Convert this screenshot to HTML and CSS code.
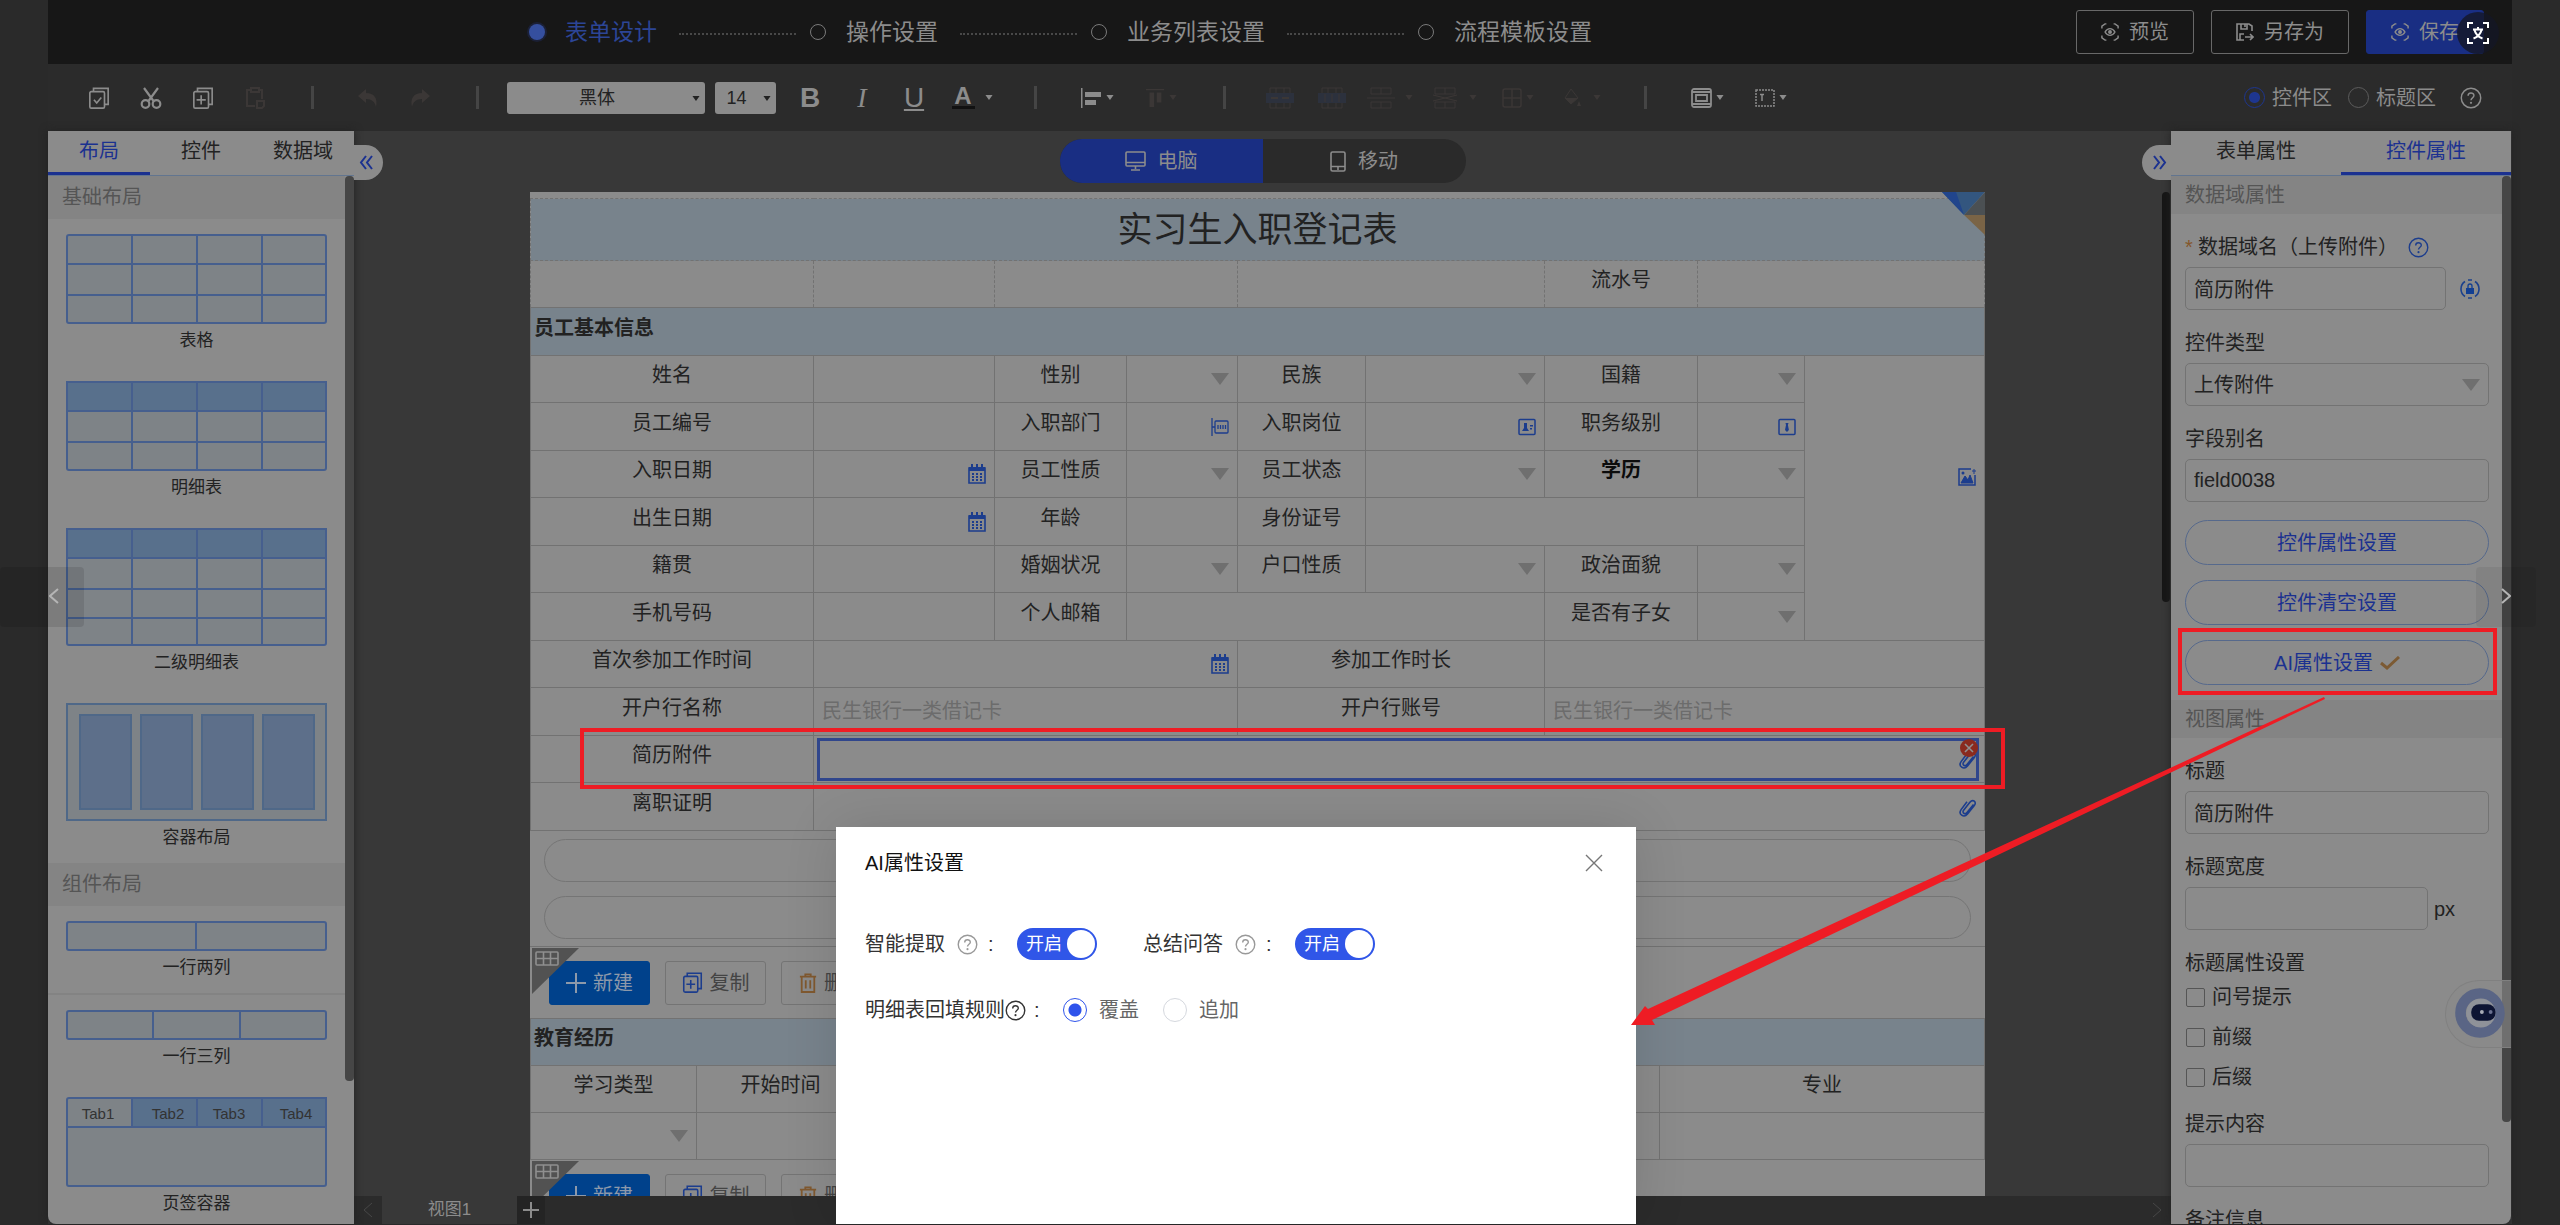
FILE: index.html
```html
<!DOCTYPE html>
<html lang="zh">
<head>
  <meta charset="UTF-8">
  <meta name="viewport" content="width=device-width, initial-scale=1.0">
  <title>表单设计</title>
  <link rel="stylesheet" href="styles.css">
</head>
<body>
  <svg class="sprite" aria-hidden="true">
    <symbol id="i-caret" viewBox="0 0 10 7"><path d="M0 0h10L5 7z" fill="currentColor"/></symbol>
    <symbol id="i-help" viewBox="0 0 24 24"><g fill="none" stroke="currentColor" stroke-width="1.6"><circle cx="12" cy="12" r="10.6"/><path d="M8.8 9.6c0-4 6.4-4 6.4-.2 0 2.4-3.2 2.4-3.2 5"/></g><circle cx="12" cy="17.3" r="1.2" fill="currentColor"/></symbol>
    <symbol id="i-cal" viewBox="0 0 18 20"><path d="M1 4h16v15H1z" fill="none" stroke="currentColor" stroke-width="1.6"/><path d="M1 3h16v4H1zM3 0h2v4H3zM8 0h2v4H8zM13 0h2v4h-2zM4 9h2v2H4zM8 9h2v2H8zM12 9h2v2h-2zM4 12h2v2H4zM8 12h2v2H8zM12 12h2v2h-2zM4 15h2v2H4zM8 15h2v2H8zM12 15h2v2h-2z" fill="currentColor"/></symbol>
    <symbol id="i-tri" viewBox="0 0 18 12"><path d="M0 0h18L9 12z" fill="currentColor"/></symbol>
    <symbol id="i-clip" viewBox="0 0 18 20"><path d="M15.5 7.5 9 15.5c-2.2 2.6-5.3.2-3.4-2.2l6.3-8c3-3.7 7.2-.4 4.4 3.2L9.5 17c-3.7 4.4-9.6.3-6.400-4.400L9 4.800" fill="none" stroke="currentColor" stroke-width="1.6"/></symbol>
    <symbol id="i-copy" viewBox="0 0 24 24"><g fill="none" stroke="currentColor" stroke-width="1.8"><rect x="2" y="5" width="16" height="18" rx="1.5"/><path d="M6 5V1.5h16V19h-4M10 9v10M5 14h10"/></g></symbol>
    <symbol id="i-eye" viewBox="0 0 20 20"><g fill="none" stroke="currentColor" stroke-width="1.6"><path d="M1 6V3.500L4.500 1H6M14 1h1.500L19 3.500V6M19 14v2.500L15.500 19H14M6 19H4.500L1 16.500V14"/><path d="M4.500 10c3-5 8-5 11 0-3 5-8 5-11 0z"/></g><circle cx="10" cy="10" r="2.2" fill="currentColor"/></symbol>
    <symbol id="i-trash" viewBox="0 0 20 22"><path d="M1 4h18M7 4V1.500h6V4M3 4v17h14V4M7.500 8v9M12.500 8v9" fill="none" stroke="currentColor" stroke-width="2"/></symbol>
    <symbol id="i-corner" viewBox="0 0 47 46"><path d="M0 0h47L0 46z" fill="#525252"/><g fill="none" stroke="#8f8f8f" stroke-width="1.6"><rect x="4" y="4" width="22" height="13" rx="1"/><path d="M4 10.500h22M11.500 4v13M18.500 4v13"/></g></symbol>
  </svg>

  <div class="app">
    <header class="topbar">
      <nav class="steps">
        <a href="#" class="step current"><i class="dot"></i>表单设计</a>
        <span class="dash"></span>
        <a href="#" class="step"><i class="dot"></i>操作设置</a>
        <span class="dash"></span>
        <a href="#" class="step"><i class="dot"></i>业务列表设置</a>
        <span class="dash"></span>
        <a href="#" class="step"><i class="dot"></i>流程模板设置</a>
      </nav>
      <div class="actions">
        <button class="btn"><svg width="18" height="18"><use href="#i-eye"/></svg>预览</button>
        <button class="btn"><svg width="18" height="18" viewBox="0 0 18 18" fill="none" stroke="currentColor" stroke-width="1.6"><path d="M8 17H1V1h12l3 2v5M5 1v5h6V1M9 1v3M8 11H4v6M9 14h8M14 11l3 3-3 3"/></svg>另存为</button>
        <button class="btn primary"><svg width="18" height="18"><use href="#i-eye"/></svg>保存</button>
      </div>
      <button class="translate" aria-label="翻译">
        <svg width="22" height="22" viewBox="0 0 22 22" fill="none" stroke="#fff" stroke-width="2"><path d="M1 6V1h5M16 1h5v5M21 16v5h-5M6 21H1v-5M6 7.500h10M11 5v2.500M14.500 8c-1 4-4 7-8 8.500M7.500 8c1 4 4 7 8 8.500"/></svg>
      </button>
    </header>

    <div class="toolbar">
      <button class="tool" aria-label="全选"><svg width="22" height="22" viewBox="0 0 24 24" fill="none" stroke="currentColor" stroke-width="1.8"><rect x="2" y="5" width="16" height="18" rx="1.5"/><path d="M6 5V1.500h16V19h-4M6.500 14l3 3.500 5-6"/></svg></button>
      <button class="tool" aria-label="剪切"><svg width="22" height="22" viewBox="0 0 22 22" fill="none" stroke="currentColor" stroke-width="2.2"><circle cx="5.5" cy="17" r="3.8"/><circle cx="16.5" cy="17" r="3.8"/><path d="M4 1l9.500 13M18 1L8.500 14"/></svg></button>
      <button class="tool" aria-label="复制"><svg width="22" height="22"><use href="#i-copy"/></svg></button>
      <button class="tool off" aria-label="粘贴" disabled><svg width="20" height="22" viewBox="0 0 20 22" fill="none" stroke="currentColor" stroke-width="2"><path d="M6 3H2v16h8M14 3h3v9M6 1h8v4H6zM12 14h7v5l-2 2h-5z"/></svg></button>
      <span class="sep"></span>
      <button class="tool off" aria-label="撤销" disabled><svg width="20" height="18" viewBox="0 0 20 18"><path d="M8 0v4c8 0 12 5 10 14-1-5-4-8-10-8v4L0 7z" fill="currentColor"/></svg></button>
      <button class="tool off" aria-label="重做" disabled><svg width="20" height="18" viewBox="0 0 20 18"><path d="M12 0v4C4 4 0 9 2 18c1-5 4-8 10-8v4l8-7z" fill="currentColor"/></svg></button>
      <span class="sep"></span>
      <div class="pick pick-font"><select aria-label="字体"><option>黑体</option></select><svg width="8" height="5"><use href="#i-caret"/></svg></div>
      <div class="pick pick-size"><select aria-label="字号"><option>14</option></select><svg width="8" height="5"><use href="#i-caret"/></svg></div>
      <button class="tool glyph bold">B</button>
      <button class="tool glyph italic">I</button>
      <button class="tool glyph under">U</button>
      <button class="tool drop wide glyph"><span class="color-a">A</span><svg width="8" height="5"><use href="#i-caret"/></svg></button>
      <span class="sep"></span>
      <button class="tool drop" aria-label="水平对齐"><svg width="22" height="22" viewBox="0 0 22 22"><path d="M1 1h1.500v20H1zM5 5h16v5H5zM5 13h11v5H5z" fill="currentColor"/></svg><svg width="8" height="5"><use href="#i-caret"/></svg></button>
      <button class="tool drop off" aria-label="垂直对齐" disabled><svg width="20" height="22" viewBox="0 0 22 22"><path d="M1 1h20v1.500H1zM5 5h5v16H5zM13 5h5v11h-5z" fill="currentColor"/></svg><svg width="8" height="5"><use href="#i-caret"/></svg></button>
      <span class="sep"></span>
      <button class="tool off" aria-label="合并" disabled><svg width="30" height="22" viewBox="0 0 30 22"><path d="M5 6V1h20v5M5 16v5h20v-5M11 1v5M19 1v5M11 16v5M19 16v5" fill="none" stroke="currentColor"/><path d="M1 6h28v10H1z" fill="#2c313d"/><path d="M6 11h7M17 11h7" stroke="currentColor" stroke-width="2"/></svg></button>
      <button class="tool off" aria-label="拆分" disabled><svg width="30" height="22" viewBox="0 0 30 22"><path d="M5 6V1h20v5M5 16v5h20v-5M11 1v5M19 1v5M11 16v5M19 16v5" fill="none" stroke="currentColor"/><path d="M1 6h28v10H1z" fill="#2c313d"/><path d="M8 7v8M15 7v8M22 7v8" stroke="currentColor"/></svg></button>
      <button class="tool drop wide off" aria-label="插入行" disabled><svg width="28" height="22" viewBox="0 0 28 22" fill="none" stroke="currentColor"><path d="M4 7V1h20v6zM4 15v6h20v-6zM14 1v6M14 15v6M0 11h28"/></svg><svg width="8" height="5"><use href="#i-caret"/></svg></button>
      <button class="tool drop wide off" aria-label="删除行" disabled><svg width="28" height="22" viewBox="0 0 28 22" fill="none" stroke="currentColor"><path d="M4 7V1h20v6zM4 15v6h20v-6zM14 1v6M14 15v6M2 8l24 6M26 8L2 14"/></svg><svg width="8" height="5"><use href="#i-caret"/></svg></button>
      <button class="tool drop off" aria-label="边框" disabled><svg width="20" height="20" viewBox="0 0 20 20" fill="none" stroke="currentColor" stroke-width="1.5"><rect x="1" y="1" width="18" height="18" rx="2"/><path d="M10 1v18M1 10h18"/></svg><svg width="8" height="5"><use href="#i-caret"/></svg></button>
      <button class="tool drop wide off" aria-label="填充" disabled><svg width="20" height="20" viewBox="0 0 20 20"><path d="M8 1l7 9-7 6-6-6z" fill="none" stroke="currentColor"/><path d="M2 10h13l-7 6zM16 13l2 5h-4z" fill="currentColor"/></svg><svg width="8" height="5"><use href="#i-caret"/></svg></button>
      <span class="sep"></span>
      <button class="tool drop" aria-label="布局"><svg width="21" height="20" viewBox="0 0 21 20" fill="none" stroke="currentColor" stroke-width="1.8"><rect x="1" y="1" width="19" height="18" rx="2"/><path d="M1 4h19M1 16h19M5 7h11v6H5z"/></svg><svg width="8" height="5"><use href="#i-caret"/></svg></button>
      <button class="tool drop" aria-label="文本框"><svg width="20" height="18" viewBox="0 0 20 18" fill="none" stroke="currentColor" stroke-width="1.5"><rect x="1" y="1" width="18" height="16" stroke-dasharray="2 1"/><path d="M5 5.500h4M7 5v7"/></svg><svg width="8" height="5"><use href="#i-caret"/></svg></button>
      <div class="area-pick">
        <label class="radio"><input type="radio" name="area" checked>控件区</label>
        <label class="radio"><input type="radio" name="area">标题区</label>
        <svg width="22" height="22"><use href="#i-help"/></svg>
      </div>
    </div>

    <main class="main">
      <aside class="panel palette">
        <div class="tabs">
          <a href="#" class="tab active">布局</a>
          <a href="#" class="tab">控件</a>
          <a href="#" class="tab">数据域</a>
        </div>
        <div class="panel-body">
          <h2 class="group">基础布局</h2>
          <div class="item">
            <svg class="thumb" viewBox="0 0 261 90"><rect x="1" y="1" width="259" height="88" rx="2"/><path d="M66 1v88M131 1v88M196 1v88M1 30h259M1 61h259"/></svg>
            <p>表格</p>
          </div>
          <div class="item">
            <svg class="thumb" viewBox="0 0 261 90"><rect x="1" y="1" width="259" height="88" rx="2"/><path class="fill" d="M1 1h259v29H1z"/><path d="M66 1v88M131 1v88M196 1v88M1 30h259M1 61h259"/></svg>
            <p>明细表</p>
          </div>
          <div class="item">
            <svg class="thumb" viewBox="0 0 261 118"><rect x="1" y="1" width="259" height="116" rx="2"/><path class="fill" d="M1 1h259v29H1z"/><path d="M66 1v116M131 1v116M196 1v116M1 30h259M1 61h259M1 90h259"/></svg>
            <p>二级明细表</p>
          </div>
          <div class="item">
            <svg class="thumb soft" viewBox="0 0 261 118"><rect x="1" y="1" width="259" height="116"/><path class="fill" d="M14 12h51v94H14zM75 12h51v94H75zM136 12h51v94h-51zM197 12h51v94h-51z"/></svg>
            <p>容器布局</p>
          </div>
          <h2 class="group">组件布局</h2>
          <div class="item ruled">
            <svg class="thumb" viewBox="0 0 261 30"><rect x="1" y="1" width="259" height="28" rx="2"/><path d="M130 1v28"/></svg>
            <p>一行两列</p>
          </div>
          <div class="item">
            <svg class="thumb" viewBox="0 0 261 30"><rect x="1" y="1" width="259" height="28" rx="2"/><path d="M87 1v28M174 1v28"/></svg>
            <p>一行三列</p>
          </div>
          <div class="item">
            <svg class="thumb" viewBox="0 0 261 90"><rect x="1" y="1" width="259" height="88" rx="2"/><path class="fill" d="M66 1h194v29H66z"/><path d="M66 1v29M131 1v29M196 1v29M1 30h259"/><text x="32" y="22">Tab1</text><text x="102" y="22">Tab2</text><text x="163" y="22">Tab3</text><text x="230" y="22">Tab4</text></svg>
            <p>页签容器</p>
          </div>
          <span class="scroll"></span>
        </div>
      </aside>

      <section class="stage">
        <button class="fold fold-left" aria-label="收起"><svg width="15" height="15" viewBox="0 0 15 15"><path d="M7 1L2 7.500 7 14M13 1L8 7.500l5 6.500"/></svg></button>
        <button class="fold fold-right" aria-label="收起"><svg width="15" height="15" viewBox="0 0 15 15"><path d="M2 1l5 6.500L2 14M8 1l5 6.500L8 14"/></svg></button>
        <div class="device">
          <button class="on"><svg width="21" height="20" viewBox="0 0 21 20" fill="none" stroke="currentColor" stroke-width="1.6"><rect x="1" y="1" width="19" height="14" rx="1"/><path d="M1 11.500h19M10.500 15v3M6 19h9"/></svg>电脑</button>
          <button><svg width="16" height="21" viewBox="0 0 16 21" fill="none" stroke="currentColor" stroke-width="1.6"><rect x="1" y="1" width="14" height="19" rx="1.5"/><path d="M1 15.500h14M8 16v3"/></svg>移动</button>
        </div>

        <div class="canvas-wrap">
          <div class="canvas">
            <svg class="ribbon" width="43" height="43" viewBox="0 0 43 43"><path d="M0 0h43L22 23z" fill="#33567f"/><path d="M0 0h14l8 23z" fill="#21458c"/><path d="M43 0v23H22z" fill="#4b5053"/><path d="M22 23h21v20z" fill="#7a6446"/></svg>
            <table class="form">
              <colgroup><col><col><col><col><col><col><col><col><col></colgroup>
              <tr class="title"><th colspan="9">实习生入职登记表</th></tr>
              <tr class="dashed"><td></td><td></td><td colspan="2"></td><td colspan="2"></td><td>流水号</td><td colspan="2"></td></tr>
              <tr class="band"><th colspan="9">员工基本信息</th></tr>
              <tr>
                <td>姓名</td><td></td><td>性别</td><td class="ctl"><svg class="tri"><use href="#i-tri"/></svg></td><td>民族</td><td class="ctl"><svg class="tri"><use href="#i-tri"/></svg></td><td>国籍</td><td class="ctl"><svg class="tri"><use href="#i-tri"/></svg></td>
                <td class="ctl photo" rowspan="6"><svg class="ic" viewBox="0 0 18 18"><path d="M13 1H1v16h16V7" fill="none" stroke="currentColor" stroke-width="1.5"/><path d="M3 15l4-7 3 4 2-5 3 8zM14 3h4M16 1v5" stroke="currentColor" fill="currentColor"/><circle cx="5" cy="5" r="1.5" fill="currentColor"/></svg></td>
              </tr>
              <tr>
                <td>员工编号</td><td></td><td>入职部门</td><td class="ctl"><svg class="ic" viewBox="0 0 18 18" fill="none" stroke="currentColor" stroke-width="1.3"><path d="M1 0v18M1 9h3"/><rect x="4" y="3" width="13" height="12" rx="1"/><path d="M7 7v4M9.500 7v4M12 7v4M14.500 7v4"/></svg></td><td>入职岗位</td><td class="ctl"><svg class="ic" viewBox="0 0 18 18"><rect x="1" y="1.5" width="16" height="15" rx="1" fill="none" stroke="currentColor" stroke-width="1.5"/><path d="M4 13h7l-2-3V5H6v5zM12 7h3v1.500h-3zM12 10h2v1.500h-2z" fill="currentColor"/></svg></td><td>职务级别</td><td class="ctl"><svg class="ic" viewBox="0 0 18 18"><rect x="1" y="1.5" width="16" height="15" rx="1" fill="none" stroke="currentColor" stroke-width="1.5"/><path d="M7.500 5h3l-.6 2 1 5L9 14l-2-2 1-5z" fill="currentColor"/></svg></td>
              </tr>
              <tr>
                <td>入职日期</td><td class="ctl"><svg class="ic"><use href="#i-cal"/></svg></td><td>员工性质</td><td class="ctl"><svg class="tri"><use href="#i-tri"/></svg></td><td>员工状态</td><td class="ctl"><svg class="tri"><use href="#i-tri"/></svg></td><td class="strong">学历</td><td class="ctl"><svg class="tri"><use href="#i-tri"/></svg></td>
              </tr>
              <tr>
                <td>出生日期</td><td class="ctl"><svg class="ic"><use href="#i-cal"/></svg></td><td>年龄</td><td></td><td>身份证号</td><td colspan="3"></td>
              </tr>
              <tr>
                <td>籍贯</td><td></td><td>婚姻状况</td><td class="ctl"><svg class="tri"><use href="#i-tri"/></svg></td><td>户口性质</td><td class="ctl"><svg class="tri"><use href="#i-tri"/></svg></td><td>政治面貌</td><td class="ctl"><svg class="tri"><use href="#i-tri"/></svg></td>
              </tr>
              <tr>
                <td>手机号码</td><td></td><td>个人邮箱</td><td colspan="3"></td><td>是否有子女</td><td class="ctl"><svg class="tri"><use href="#i-tri"/></svg></td>
              </tr>
              <tr>
                <td>首次参加工作时间</td><td class="ctl" colspan="3"><svg class="ic"><use href="#i-cal"/></svg></td><td colspan="2">参加工作时长</td><td colspan="3"></td>
              </tr>
              <tr>
                <td>开户行名称</td><td class="hint" colspan="3">民生银行一类借记卡</td><td colspan="2">开户行账号</td><td class="hint" colspan="3">民生银行一类借记卡</td>
              </tr>
              <tr>
                <td>简历附件</td>
                <td class="picked" colspan="8">
                  <div class="picked-box">
                    <svg class="ic"><use href="#i-clip"/></svg>
                    <button class="remove" aria-label="删除"><svg width="10" height="10" viewBox="0 0 10 10"><path d="M1 1l8 8M9 1L1 9" stroke="#8f8f8f" stroke-width="1.6"/></svg></button>
                  </div>
                </td>
              </tr>
              <tr>
                <td>离职证明</td><td class="ctl" colspan="8"><svg class="ic"><use href="#i-clip"/></svg></td>
              </tr>
            </table>
            <div class="slots"><div class="slot"></div><div class="slot"></div></div>

            <div class="detail-tools">
              <svg class="corner" width="47" height="46"><use href="#i-corner"/></svg>
              <button class="mini solid"><svg width="20" height="20" viewBox="0 0 20 20"><path d="M10 0v20M0 10h20" stroke="currentColor" stroke-width="2"/></svg>新建</button>
              <button class="mini"><svg class="blue" width="21" height="21"><use href="#i-copy"/></svg>复制</button>
              <button class="mini"><svg class="orange" width="18" height="20"><use href="#i-trash"/></svg>删除</button>
            </div>
            <table class="form detail">
              <colgroup><col><col><col><col></colgroup>
              <tr class="band"><th colspan="4">教育经历</th></tr>
              <tr><td>学习类型</td><td>开始时间</td><td></td><td>专业</td></tr>
              <tr><td class="ctl"><svg class="tri"><use href="#i-tri"/></svg></td><td></td><td></td><td></td></tr>
            </table>
            <div class="detail-tools">
              <svg class="corner" width="47" height="46"><use href="#i-corner"/></svg>
              <button class="mini solid"><svg width="20" height="20" viewBox="0 0 20 20"><path d="M10 0v20M0 10h20" stroke="currentColor" stroke-width="2"/></svg>新建</button>
              <button class="mini"><svg class="blue" width="21" height="21"><use href="#i-copy"/></svg>复制</button>
              <button class="mini"><svg class="orange" width="18" height="20"><use href="#i-trash"/></svg>删除</button>
            </div>
          </div>
          <span class="canvas-scroll"></span>
        </div>

        <footer class="views">
          <button class="view-nav" aria-label="上一个"><svg width="10" height="16" viewBox="0 0 10 16"><path d="M9 1L1 8l8 7"/></svg></button>
          <a href="#" class="view-tab">视图1</a>
          <button class="view-nav add" aria-label="新增视图"><svg width="16" height="16" viewBox="0 0 16 16"><path d="M8 0v16M0 8h16"/></svg></button>
          <button class="view-nav last" aria-label="下一个"><svg width="10" height="16" viewBox="0 0 10 16"><path d="M1 1l8 7-8 7"/></svg></button>
        </footer>

        <div class="dialog" role="dialog" aria-label="AI属性设置">
          <div class="dialog-head">
            <h3>AI属性设置</h3>
            <button class="close" aria-label="关闭"><svg width="18" height="18" viewBox="0 0 18 18"><path d="M1 1l16 16M17 1L1 17" stroke="#777" stroke-width="1.4"/></svg></button>
          </div>
          <div class="dialog-row">
            <span>智能提取</span><svg class="q" width="21" height="21"><use href="#i-help"/></svg><span class="colon">:</span>
            <label class="switch"><input type="checkbox" role="switch" checked aria-label="智能提取"><span>开启</span></label>
            <span>总结问答</span><svg class="q" width="21" height="21"><use href="#i-help"/></svg><span class="colon">:</span>
            <label class="switch"><input type="checkbox" role="switch" checked aria-label="总结问答"><span>开启</span></label>
          </div>
          <div class="dialog-row">
            <span>明细表回填规则</span><svg width="21" height="21"><use href="#i-help"/></svg><span class="colon">:</span>
            <label class="radio bright"><input type="radio" name="rule" checked>覆盖</label>
            <label class="radio bright"><input type="radio" name="rule">追加</label>
          </div>
        </div>
      </section>

      <aside class="panel props">
        <div class="tabs">
          <a href="#" class="tab">表单属性</a>
          <a href="#" class="tab active">控件属性</a>
        </div>
        <div class="panel-body">
          <h2 class="group">数据域属性</h2>
          <div class="fields">
            <div class="field">
              <label for="f-name"><span class="req">*</span>数据域名（上传附件）<svg class="blue" width="21" height="21"><use href="#i-help"/></svg></label>
              <div class="line">
                <input id="f-name" type="text" value="简历附件">
                <svg width="20" height="20" viewBox="0 0 20 20"><path d="M5 17.500A9 9 0 0 1 5 2.500M15 2.500a9 9 0 0 1 0 15M8 1h4M8 19h4" fill="none" stroke="#1c418d" stroke-width="1.6"/><path d="M6 9h8v6H6z" fill="#123f93"/><path d="M8 9V7a2 2 0 0 1 4 0v2" fill="none" stroke="#123f93" stroke-width="1.3"/></svg>
              </div>
            </div>
            <div class="field">
              <label for="f-type">控件类型</label>
              <div class="select-box"><select id="f-type"><option>上传附件</option></select><svg class="tri"><use href="#i-tri"/></svg></div>
            </div>
            <div class="field">
              <label for="f-alias">字段别名</label>
              <input id="f-alias" type="text" value="field0038">
            </div>
            <div class="pills">
              <button>控件属性设置</button>
              <button>控件清空设置</button>
              <button>AI属性设置<svg width="20" height="14" viewBox="0 0 20 14"><path d="M1 7l6 5L19 1" fill="none" stroke="#7c5a33" stroke-width="3"/></svg></button>
            </div>
          </div>
          <h2 class="group">视图属性</h2>
          <div class="fields">
            <div class="field">
              <label for="f-title">标题</label>
              <input id="f-title" type="text" value="简历附件">
            </div>
            <div class="field">
              <label for="f-width">标题宽度</label>
              <div class="line unit"><input id="f-width" type="text"><span>px</span></div>
            </div>
            <div class="field">
              <div class="cap">标题属性设置</div>
              <div class="checks">
                <label><input type="checkbox">问号提示</label>
                <label><input type="checkbox">前缀</label>
                <label><input type="checkbox">后缀</label>
              </div>
            </div>
            <div class="field">
              <label for="f-tip">提示内容</label>
              <input id="f-tip" type="text">
            </div>
            <div class="field">
              <label for="f-note">备注信息</label>
              <input id="f-note" type="text">
            </div>
          </div>
          <span class="scroll"></span>
        </div>
        <button class="robot" aria-label="助手">
          <svg width="65" height="66" viewBox="0 0 65 68"><circle cx="34" cy="33" r="20" fill="none" stroke="#5a6585" stroke-width="11"/><circle cx="35" cy="33" r="15" fill="#8f9299"/><rect x="25" y="24" width="25" height="17" rx="8" fill="#0d1433"/><circle cx="36" cy="32" r="2" fill="#a8abb5"/><circle cx="45" cy="32" r="2" fill="#6b7190"/></svg>
        </button>
      </aside>
    </main>
  </div>

  <button class="pager pager-left" aria-label="上一张"><svg width="10" height="16" viewBox="0 0 10 16"><path d="M9 1L1 8l8 7"/></svg></button>
  <button class="pager pager-right" aria-label="下一张"><svg width="10" height="16" viewBox="0 0 10 16"><path d="M1 1l8 7-8 7"/></svg></button>

  <svg class="marks" width="2560" height="1225" viewBox="0 0 2560 1225" aria-hidden="true">
    <g fill="none" stroke="#ee1c24" stroke-width="4">
      <rect x="582" y="730" width="1421" height="57"/>
      <rect x="2180" y="630" width="315" height="63"/>
    </g>
    <path d="M2324 697L1648 1009l-3-3-14 19h24l-3-5L2325 699z" fill="#ee1c24"/>
  </svg>
</body>
</html>
```

FILE: styles.css
```css
* {
  box-sizing: border-box;
}

body {
  margin: 0;
  height: 100vh;
  overflow: hidden;
  position: relative;
  background-color: #2a2a2a;
  color: #222;
  font-family: "Liberation Sans", "Noto Sans CJK SC", sans-serif;
  font-size: 20px;
  line-height: 28px;
}

button,
input,
select {
  font: inherit;
  color: inherit;
  margin: 0;
  padding: 0;
  border: none;
  background: none;
}

a {
  color: inherit;
  text-decoration: none;
}

h2,
h3,
p {
  margin: 0;
  font-weight: normal;
}

svg {
  flex-shrink: 0;
}

.sprite {
  position: absolute;
  width: 0;
  height: 0;
}

.blue {
  color: #1c3d8d;
}

.orange {
  color: #80592f;
}

.app {
  height: 100%;
  margin: 0 48px;
  padding-bottom: 1px;
  display: flex;
  flex-direction: column;
}

/* 顶部步骤条 */
.topbar {
  position: relative;
  height: 64px;
  flex-shrink: 0;
  display: flex;
  align-items: center;
  justify-content: space-between;
  padding: 0 28px 0 481px;
  background-color: #171717;
  color: #8c8c8c;
}

.steps {
  display: flex;
  align-items: center;
  font-size: 23px;
}

.step {
  display: flex;
  align-items: center;
  gap: 20px;
}

.step.current {
  color: #2c4596;
}

.dot {
  width: 16px;
  height: 16px;
  border: 1px solid #7a7a7a;
  border-radius: 50%;
}

.current .dot {
  border: none;
  background-color: #354f9e;
  box-shadow: 0 0 0 2px #1b2036;
}

.dash {
  width: 117px;
  margin: 4px 14px 0 22px;
  border-top: 2px dotted #484848;
}

.actions {
  display: flex;
  gap: 17px;
}

.btn {
  height: 44px;
  padding: 0 24px;
  display: flex;
  align-items: center;
  gap: 10px;
  border: 1px solid #686868;
  border-radius: 3px;
}

.btn.primary {
  border-color: #192e83;
  background-color: #192e83;
}

.translate {
  position: absolute;
  right: 13px;
  top: 12px;
  width: 42px;
  height: 42px;
  display: grid;
  place-items: center;
  border-radius: 50%;
  background-color: rgba(20, 22, 38, 0.8);
}

/* 工具栏 */
.toolbar {
  height: 67px;
  flex-shrink: 0;
  display: flex;
  align-items: center;
  padding: 0 30px 0 25px;
  background-color: #2b2b2b;
  color: #8c8c8c;
}

.tool {
  width: 52px;
  height: 32px;
  flex-shrink: 0;
  display: flex;
  align-items: center;
  justify-content: center;
}

.tool.drop {
  width: 64px;
  gap: 4px;
}

.tool.wide {
  gap: 10px;
}

.tool.off {
  color: #3b3736;
}

.sep {
  width: 3px;
  height: 23px;
  flex-shrink: 0;
  margin: 0 28px 0 30px;
  background-color: #454545;
}

.glyph {
  font-size: 28px;
  line-height: 28px;
}

.bold {
  margin-left: 8px;
  font-weight: bold;
}

.italic {
  font-family: "Liberation Serif", serif;
  font-style: italic;
}

.under {
  text-decoration: underline;
}

.color-a {
  width: 23px;
  font-size: 24px;
  font-weight: bold;
  line-height: 20px;
  border-bottom: 3px solid #111;
}

.pick {
  position: relative;
  height: 32px;
  border-radius: 3px;
  background-color: #8b8b8b;
  color: #222;
}

.pick select,
.select-box select {
  width: 100%;
  height: 100%;
  appearance: none;
}

.pick select {
  padding-right: 18px;
  font-size: 18px;
  text-align: center;
  text-align-last: center;
}

.pick svg {
  position: absolute;
  right: 5px;
  top: 14px;
}

.pick-font {
  width: 198px;
}

.pick-size {
  width: 61px;
  margin-left: 10px;
}

.area-pick {
  margin-left: auto;
  display: flex;
  align-items: center;
  gap: 16px;
}

.area-pick svg {
  margin-left: 8px;
}

.radio {
  display: flex;
  align-items: center;
  gap: 7px;
}

.radio input {
  appearance: none;
  width: 21px;
  height: 21px;
  border: 1px solid #5c5c5c;
  border-radius: 50%;
}

.radio input:checked {
  border-color: #1e368f;
  background: radial-gradient(#1e368f 5px, transparent 6px);
}

.radio.bright {
  gap: 12px;
  color: #666;
}

.radio.bright input {
  width: 24px;
  height: 24px;
  border-color: #d5d8de;
}

.radio.bright input:checked {
  border-color: #2f54eb;
  background: radial-gradient(#2f54eb 6px, transparent 7px);
}

/* 侧边面板 */
.main {
  flex: 1;
  min-height: 0;
  display: flex;
  background-color: #383838;
}

.panel {
  position: relative;
  z-index: 1;
  flex-shrink: 0;
  display: flex;
  flex-direction: column;
  background-color: #8b8b8b;
  box-shadow: 0 0 8px #222;
}

.palette {
  width: 306px;
  border-radius: 0 0 0 8px;
}

.props {
  width: 340px;
  margin-right: 1px;
  border-radius: 0 0 8px 0;
}

.tabs {
  height: 45px;
  flex-shrink: 0;
  display: flex;
  border-bottom: 1px solid #62758f;
}

.tab {
  flex: 1;
  height: 44px;
  padding-top: 6px;
  text-align: center;
}

.tab.active {
  color: #1b3190;
  border-bottom: 3px solid #1b3190;
}

.panel-body {
  position: relative;
  flex: 1;
  min-height: 0;
  overflow: hidden;
}

.scroll {
  position: absolute;
  top: 0;
  right: 0;
  width: 9px;
  height: 905px;
  border-radius: 4px;
  background-color: #464646;
}

.props .scroll {
  height: 946px;
}

.group {
  height: 43px;
  padding-left: 14px;
  margin-right: 9px;
  background-color: #848484;
  color: #555;
  font-size: 20px;
  line-height: 43px;
}

.props .group {
  height: 38px;
  line-height: 38px;
}

.item {
  padding: 15px 27px 8px 18px;
  text-align: center;
  font-size: 17px;
}

.item.ruled {
  border-bottom: 2px solid #838383;
}

.item p {
  line-height: 34px;
}

.thumb {
  display: block;
  width: 100%;
  fill: #7e8387;
  stroke: #465f8e;
  stroke-width: 2px;
}

.thumb .fill {
  fill: #58708c;
}

.thumb.soft {
  stroke: #4f6888;
}

.thumb.soft .fill {
  fill: #5d6f8a;
}

.thumb text {
  fill: #333;
  stroke: none;
  font-size: 15px;
  text-anchor: middle;
}

/* 设计区 */
.stage {
  position: relative;
  flex: 1;
  min-width: 0;
  display: flex;
  flex-direction: column;
}

.fold {
  position: absolute;
  z-index: 2;
  top: 14px;
  width: 29px;
  height: 35px;
  display: grid;
  place-items: center;
  background-color: #8b8b8b;
}

.fold path {
  fill: none;
  stroke: #1b3190;
  stroke-width: 2px;
}

.fold-left {
  left: 0;
  padding-right: 5px;
  border-radius: 0 18px 18px 0;
}

.fold-right {
  right: 0;
  padding-left: 5px;
  border-radius: 18px 0 0 18px;
}

.device {
  align-self: center;
  margin: 8px 0 9px;
  display: flex;
  border-radius: 22px;
  overflow: hidden;
  background-color: #2a2a2a;
  color: #8c8c8c;
}

.device button {
  width: 203px;
  height: 44px;
  display: flex;
  align-items: center;
  justify-content: center;
  gap: 12px;
}

.device .on {
  background-color: #192e83;
}

.canvas-wrap {
  position: relative;
  flex: 1;
  min-height: 0;
  overflow: hidden;
  padding: 0 186px 0 176px;
}

.canvas-scroll {
  position: absolute;
  top: 0;
  right: 1px;
  width: 8px;
  height: 410px;
  border-radius: 4px;
  background-color: #161616;
}

.canvas {
  position: relative;
  padding-top: 6px;
  background-color: #8b8b8b;
}

.ribbon {
  position: absolute;
  top: 0;
  right: 0;
}

.form {
  width: 100%;
  table-layout: fixed;
  border-collapse: collapse;
}

.form col:nth-child(1) { width: 283px; }
.form col:nth-child(2) { width: 181px; }
.form col:nth-child(3) { width: 132px; }
.form col:nth-child(4) { width: 111px; }
.form col:nth-child(5) { width: 128px; }
.form col:nth-child(6) { width: 179px; }
.form col:nth-child(7) { width: 153px; }
.form col:nth-child(8) { width: 107px; }

.detail col:nth-child(1) { width: 166px; }
.detail col:nth-child(2) { width: 168px; }
.detail col:nth-child(3) { width: 795px; }
.detail col:nth-child(4) { width: auto; }

.form tr {
  height: 48px;
}

.form tr:nth-child(even),
.detail tr:nth-child(n) {
  height: 47px;
}

.form tr.title:first-child {
  height: 62px;
}

.form td,
.form th {
  padding: 0 0 8px;
  border: 1px solid #727272;
  text-align: center;
}

.form .title th {
  padding: 0;
  border-style: dashed;
  background-color: #78838c;
  font-size: 35px;
  line-height: 44px;
  font-weight: normal;
}

.form .dashed td {
  border-style: dashed;
}

.form .band th {
  padding-left: 3px;
  background-color: #78838c;
  text-align: left;
}

.form .ctl {
  padding: 0 8px 0 0;
  text-align: right;
  line-height: 0;
}

.form .photo {
  padding-bottom: 42px;
}

.form .strong {
  font-weight: bold;
  color: #0c0c0c;
}

.form .hint {
  padding: 0 0 2px 8px;
  color: #6c6c6c;
  text-align: left;
}

.form .picked {
  padding: 1px 5px 1px 3px;
}

.tri {
  width: 18px;
  height: 12px;
  color: #6f6f6f;
}

.ic {
  width: 18px;
  height: 20px;
  color: #1c3d8d;
}

.picked-box {
  position: relative;
  height: 43px;
  display: flex;
  align-items: center;
  justify-content: flex-end;
  border: 3px solid #30468c;
  background-color: #8b8b8b;
}

.remove {
  position: absolute;
  top: -2px;
  right: -2px;
  width: 18px;
  height: 18px;
  display: grid;
  place-items: center;
  border-radius: 50%;
  background-color: #8a2a1e;
}

.slots {
  display: flex;
  flex-direction: column;
  gap: 14px;
  padding: 8px 14px 7px;
  border-bottom: 1px solid #727272;
}

.slot {
  height: 43px;
  border: 1px solid #757575;
  border-radius: 22px;
}

.detail-tools {
  position: relative;
  height: 71px;
  display: flex;
  align-items: center;
  gap: 15px;
  padding: 0 19px;
}

.corner {
  position: absolute;
  z-index: 1;
  left: 2px;
  top: 1px;
}

.mini {
  width: 101px;
  height: 44px;
  display: flex;
  align-items: center;
  justify-content: center;
  gap: 7px;
  border: 1px solid #747474;
  border-radius: 3px;
  color: #444;
}

.mini.solid {
  border-color: #00418b;
  background-color: #00418b;
  color: #8d99aa;
}

/* 视图页签 */
.views {
  height: 28px;
  flex-shrink: 0;
  display: flex;
  background-color: #2b2b2b;
  color: #8c8c8c;
}

.view-nav {
  width: 28px;
  display: grid;
  place-items: center;
}

.view-nav path {
  fill: none;
  stroke: #474747;
  stroke-width: 1px;
}

.view-nav.add {
  background-color: #242424;
}

.view-nav.add path {
  stroke: #8c8c8c;
  stroke-width: 2px;
}

.view-nav.last {
  margin-left: auto;
}

.view-tab {
  width: 135px;
  background-color: #383838;
  font-size: 17px;
  text-align: center;
}

/* 弹窗 */
.dialog {
  position: absolute;
  z-index: 3;
  left: 482px;
  bottom: 0;
  width: 800px;
  height: 397px;
  padding: 22px 29px;
  background-color: #fff;
  color: #333;
  box-shadow: 0 0 50px rgba(0, 0, 0, 0.12);
}

.dialog-head {
  display: flex;
  align-items: center;
  justify-content: space-between;
  margin-bottom: 50px;
  padding-right: 4px;
}

.dialog-head h3 {
  font-size: 20px;
  color: #111;
}

.close {
  display: grid;
  place-items: center;
}

.dialog-row {
  height: 34px;
  display: flex;
  align-items: center;
  margin-bottom: 32px;
}

.colon {
  width: 37px;
  padding-left: 8px;
}

.q {
  margin: 0 2px 0 12px;
  color: #999;
}

.dialog-row .radio {
  margin-right: 24px;
}

.switch {
  position: relative;
  width: 80px;
  height: 32px;
  margin-right: 46px;
  border-radius: 16px;
  background-color: #3056e8;
  color: #fff;
  font-size: 18px;
  line-height: 32px;
}

.switch span {
  padding-left: 9px;
}

.switch input {
  position: absolute;
  right: 2px;
  top: 2px;
  width: 28px;
  height: 28px;
  appearance: none;
  border-radius: 50%;
  background-color: #fff;
}

/* 属性表单 */
.fields {
  padding: 0 22px 0 14px;
}

.field {
  padding-top: 13px;
}

.field > label,
.cap {
  height: 40px;
  display: flex;
  align-items: center;
}

.field label .blue {
  margin-left: 10px;
}

.req {
  width: 13px;
  color: #84562a;
}

.field input[type="text"],
.select-box {
  width: 100%;
  height: 43px;
  padding: 0 8px;
  border: 1px solid #737373;
  border-radius: 5px;
}

.select-box {
  display: flex;
  align-items: center;
}

.line {
  display: flex;
  align-items: center;
  gap: 14px;
  padding-right: 9px;
}

.line.unit {
  gap: 6px;
  padding-right: 34px;
}

.line.unit span {
  width: 21px;
}

.line input[type="text"] {
  flex: 1;
  min-width: 0;
}

.pills {
  display: flex;
  flex-direction: column;
  gap: 15px;
  padding: 18px 0 15px;
}

.pills button {
  height: 45px;
  display: flex;
  align-items: center;
  justify-content: center;
  gap: 7px;
  border: 1px solid #56698c;
  border-radius: 23px;
  color: #1b3190;
}

.checks {
  display: flex;
  flex-direction: column;
  gap: 12px;
}

.checks label {
  display: flex;
  align-items: center;
  gap: 7px;
}

.checks input {
  appearance: none;
  width: 19px;
  height: 19px;
  margin-left: 1px;
  border: 1px solid #555;
  border-radius: 2px;
}

.robot {
  position: absolute;
  right: 0;
  top: 849px;
  border: 1px solid #808080;
  border-right: none;
  border-radius: 34px 0 0 34px;
  background-color: rgba(139, 139, 139, 0.6);
}

.robot svg {
  display: block;
}

/* 翻页按钮与标注 */
.pager {
  position: absolute;
  z-index: 4;
  top: 567px;
  height: 60px;
  border-radius: 4px;
  background-color: rgba(0, 0, 0, 0.1);
}

.pager path {
  fill: none;
  stroke: #b5b5b5;
  stroke-width: 2px;
}

.pager-left {
  left: 0;
  width: 84px;
  padding-left: 24px;
}

.pager-right {
  right: 24px;
  width: 60px;
  background-color: rgba(0, 0, 0, 0.06);
}

.marks {
  position: absolute;
  z-index: 5;
  top: 0;
  left: 0;
  pointer-events: none;
}
```
